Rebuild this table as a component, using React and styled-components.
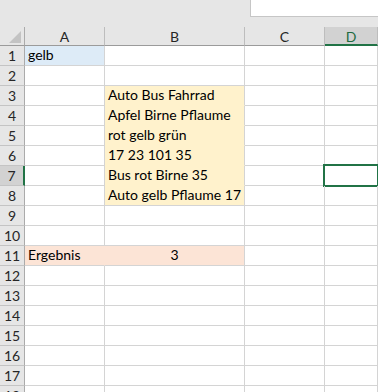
import React from 'react'
import styled, { createGlobalStyle } from 'styled-components'

const GlobalStyle = createGlobalStyle`
  body {
    margin: 0;
    background: #ffffff;
    font-family: Lato, "Open Sans", sans-serif;
    overflow: hidden;
  }
`

const fills = {
  blue: '#ddebf7',
  yellow: '#fff2cc',
  peach: '#fce4d6',
}

const columns = ['A', 'B', 'C', 'D']
const rowCount = 18
const selected = { col: 'D', row: 7 }

const cells = {
  1: { A: { text: 'gelb', fill: 'blue' } },
  3: { B: { text: 'Auto Bus Fahrrad', fill: 'yellow' } },
  4: { B: { text: 'Apfel Birne Pflaume', fill: 'yellow' } },
  5: { B: { text: 'rot gelb grün', fill: 'yellow' } },
  6: { B: { text: '17 23 101 35', fill: 'yellow' } },
  7: { B: { text: 'Bus rot Birne 35', fill: 'yellow' } },
  8: { B: { text: 'Auto gelb Pflaume 17', fill: 'yellow' } },
  11: {
    A: { text: 'Ergebnis', fill: 'peach' },
    B: { text: '3', fill: 'peach', align: 'center' },
  },
}

const Page = styled.div`
  width: 378px;
  height: 392px;
  overflow: hidden;
  background: #e6e6e6;
`

const TopBar = styled.div`
  height: 27px;
  display: flex;
  justify-content: flex-end;
`

const FormulaBox = styled.div`
  width: 127px;
  height: 16px;
  background: #ffffff;
  border-left: 1px solid #c6c6c6;
  border-bottom: 1px solid #c6c6c6;
`

const Sheet = styled.div`
  display: grid;
  grid-template-columns: 25px 80px 140px 80px 1fr;
  grid-template-rows: 19px;
  grid-auto-rows: 20px;
  background: #ffffff;
`

const Corner = styled.div`
  background: #e6e6e6;
  border-right: 1px solid #ababab;
  border-bottom: 1px solid #9b9b9b;
  display: flex;
  align-items: flex-end;
  justify-content: flex-end;
  padding: 0 3px 2px 0;
  box-sizing: border-box;
`

const ColHead = styled.div`
  box-sizing: border-box;
  display: flex;
  align-items: center;
  justify-content: center;
  font-size: 14px;
  color: ${p => (p.$active ? '#1e6b41' : '#262626')};
  background: ${p => (p.$active ? '#d2d2d2' : '#e6e6e6')};
  border-right: 1px solid #bdbdbd;
  border-bottom: ${p => (p.$active ? '2px solid #217346' : '1px solid #9b9b9b')};
  padding-top: 1px;
`

const RowHead = styled.div`
  box-sizing: border-box;
  display: flex;
  align-items: center;
  justify-content: center;
  font-size: 14px;
  color: #262626;
  background: ${p => (p.$active ? '#d2d2d2' : '#e6e6e6')};
  border-bottom: 1px solid #c4c4c4;
  border-right: ${p => (p.$active ? '2px solid #217346' : '1px solid #ababab')};
`

const Cell = styled.div`
  position: relative;
  box-sizing: border-box;
  display: flex;
  align-items: flex-end;
  justify-content: ${p => (p.$align === 'center' ? 'center' : 'flex-start')};
  padding: 0 3px 1px;
  font-size: 14px;
  color: #000000;
  white-space: nowrap;
  overflow: visible;
  line-height: 18px;
  background: ${p => p.$fill || 'transparent'};
  border-right: 1px solid ${p => p.$fillRight || '#d4d4d4'};
  border-bottom: 1px solid ${p => p.$fillBottom || '#d4d4d4'};

  ${p =>
    p.$selected &&
    `
    &::after {
      content: '';
      position: absolute;
      left: -2px;
      top: -2px;
      right: -2px;
      bottom: -2px;
      border: 2px solid #217346;
    }
  `}
`

const cellAt = (row, col) => (cells[row] || {})[col]

const nextCol = col => columns[columns.indexOf(col) + 1]

function CornerMark() {
  return (
    <svg width="12" height="12" viewBox="0 0 12 12">
      <polygon points="12,0 12,12 0,12" fill="#c3c3c3" />
    </svg>
  )
}

export default function App() {
  const rows = Array.from({ length: rowCount }, (_, i) => i + 1)

  return (
    <Page>
      <GlobalStyle />
      <TopBar>
        <FormulaBox />
      </TopBar>
      <Sheet>
        <Corner>
          <CornerMark />
        </Corner>
        {columns.map(col => (
          <ColHead key={col} $active={col === selected.col}>
            {col}
          </ColHead>
        ))}
        {rows.map(row => (
          <React.Fragment key={row}>
            <RowHead $active={row === selected.row}>{row}</RowHead>
            {columns.map(col => {
              const cell = cellAt(row, col)
              const fill = cell && fills[cell.fill]
              const right = cellAt(row, nextCol(col))
              const below = cellAt(row + 1, col)
              return (
                <Cell
                  key={col}
                  $fill={fill}
                  $align={cell && cell.align}
                  $fillRight={fill && right && right.fill === cell.fill ? fill : null}
                  $fillBottom={fill && below && below.fill === cell.fill ? fill : null}
                  $selected={row === selected.row && col === selected.col}
                >
                  {cell && cell.text}
                </Cell>
              )
            })}
          </React.Fragment>
        ))}
      </Sheet>
    </Page>
  )
}
